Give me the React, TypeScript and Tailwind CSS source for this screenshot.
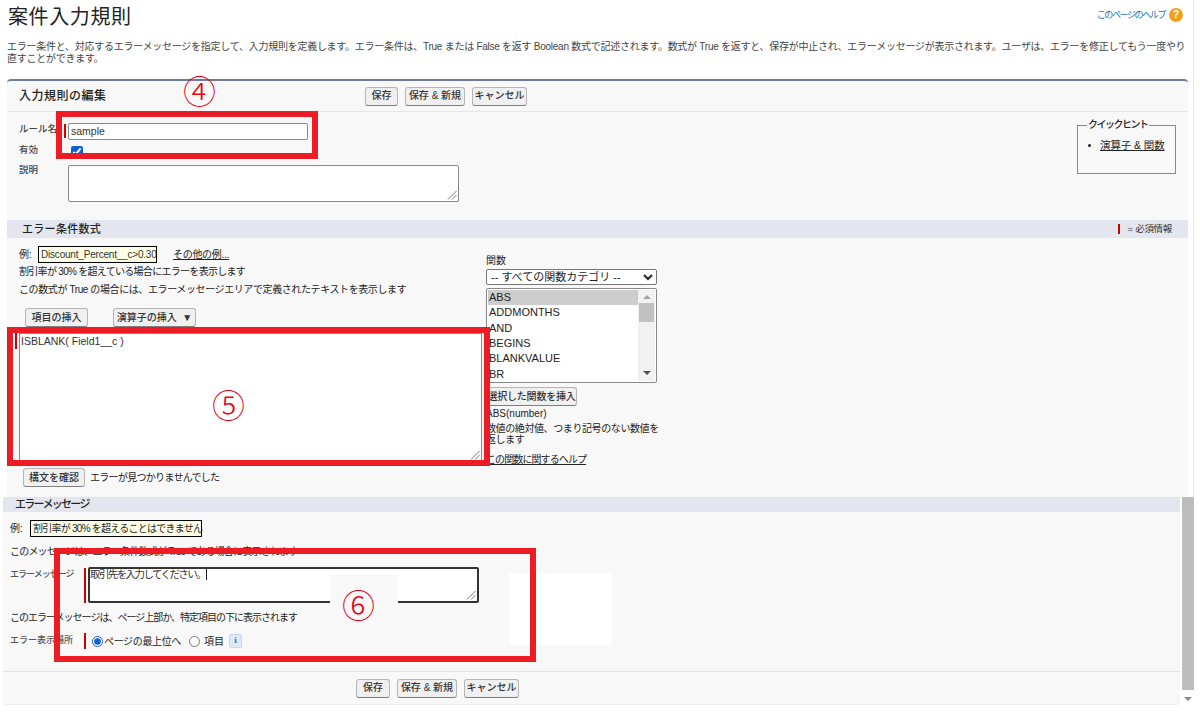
const font = "[font-family:'Liberation_Sans','Noto_Sans_CJK_JP',sans-serif]";

function Btn({ children, className = "" }: { children: React.ReactNode; className?: string }) {
  return (
    <button
      type="button"
      className={`h-[19px] rounded-[3px] border border-[#b5b5b5] border-b-[#7f7f7f] bg-[#f0f0f0] text-[10px] leading-none font-medium text-[#333] whitespace-nowrap ${className}`}
    >
      {children}
    </button>
  );
}

function Req({ className = "" }: { className?: string }) {
  return <div className={`w-[2px] shrink-0 bg-[#c00] ${className}`} />;
}

function Resize() {
  return (
    <svg className="absolute right-[1px] bottom-[1px]" width="10" height="10" viewBox="0 0 10 10">
      <path d="M1 9.5 9.5 1M5 9.5 9.5 5" stroke="#777" strokeWidth="1" fill="none" />
    </svg>
  );
}

function Note({ className }: { className: string }) {
  return <div className={`absolute pointer-events-none ${className}`} />;
}

const functions = ["ABS", "ADDMONTHS", "AND", "BEGINS", "BLANKVALUE", "BR"];

export default function App() {
  return (
    <div className={`relative h-[716px] w-[1200px] overflow-hidden bg-white text-[#222] ${font}`}>
      {/* page title */}
      <div className="flex h-[41px] items-start justify-between pt-[2px] pr-[17px] pl-[8px]">
        <h1 className="text-[20px] leading-[30px] font-normal tracking-[0.6px] text-[#222]">案件入力規則</h1>
        <div className="mt-[6px] flex items-center gap-[4px]">
          <span className="text-[9px] leading-[14px] tracking-[-1.4px] text-[#1b6fc0]">このページのヘルプ</span>
          <span className="flex h-[14px] w-[14px] items-center justify-center rounded-full bg-[#eda21e] text-[10px] leading-none font-bold text-white">?</span>
        </div>
      </div>
      <p className="h-[38px] pl-[7px] text-[10px] leading-[12px] tracking-[-0.26px] whitespace-nowrap text-[#444]">
        エラー条件と、対応するエラーメッセージを指定して、入力規則を定義します。エラー条件は、True または False を返す Boolean 数式で記述されます。数式が True を返すと、保存が中止され、エラーメッセージが表示されます。ユーザは、エラーを修正してもう一度やり
        <br />
        直すことができます。
      </p>

      {/* upper panel */}
      <div className="ml-[7px] h-[418px] w-[1181px] rounded-t-[4px] border-t-2 border-[#6f7a99] bg-[#f8f8f8]">
        <div className="flex h-[31px] items-center border-b border-[#e6e6e6] pl-[12px]">
          <h2 className="w-[346px] text-[12px] font-medium tracking-[0.5px] text-[#222]">入力規則の編集</h2>
          <div className="flex gap-[7px]">
            <Btn className="w-[33px]">保存</Btn>
            <Btn className="w-[60px]">保存 &amp; 新規</Btn>
            <Btn className="w-[55px]">キャンセル</Btn>
          </div>
        </div>

        <div className="flex h-[108px] justify-between pt-[10px] pr-[12px] pl-[12px]">
          <div className="text-[9.5px] font-medium text-[#444]">
            <div className="flex h-[18px] items-center">
              <span className="w-[45px] pb-[3px]">ルール名</span>
              <Req className="h-[14px]" />
              <input
                readOnly
                value="sample"
                className="ml-[2px] h-[17px] w-[240px] rounded-[2px] border border-[#888] bg-white px-[2px] text-[10.5px] font-normal text-[#333] outline-none"
              />
            </div>
            <div className="mt-[5px] flex h-[14px] items-center">
              <span className="w-[52px] pb-[4px]">有効</span>
              <input type="checkbox" readOnly checked className="h-[12px] w-[12px] accent-[#0f5fd0]" />
            </div>
            <div className="mt-[6px] flex">
              <span className="-mt-[2px] w-[49px]">説明</span>
              <div className="relative h-[37px] w-[391px] rounded-[2px] border border-[#888] bg-white">
                <Resize />
              </div>
            </div>
          </div>
          <fieldset className="-mt-[3px] h-[55px] w-[99px] border border-[#888] pl-[10px] text-[10px]">
            <legend className="-ml-[1px] px-[1px] text-[10px] leading-[12px] font-medium tracking-[-1.5px] text-[#222]">クイックヒント</legend>
            <div className="mt-[7px] flex items-center gap-[9px]">
              <span className="h-[3px] w-[3px] rounded-full bg-[#222]" />
              <span className="text-[10.5px] tracking-[-0.1px] underline">演算子 &amp; 関数</span>
            </div>
          </fieldset>
        </div>

        <div className="flex h-[18px] items-center justify-between bg-[#e3e6ef] pr-[16px] pl-[15px]">
          <h3 className="text-[11px] font-medium tracking-[0.3px] text-[#222]">エラー条件数式</h3>
          <div className="flex items-center gap-[8px] text-[9.5px] tracking-[-0.3px] text-[#333]">
            <Req className="h-[10px]" />
            <span>= 必須情報</span>
          </div>
        </div>

        <div className="flex pt-[8px] pl-[12px]">
          <div className="w-[467px] text-[10px] text-[#222]">
            <div className="flex h-[17px] items-center">
              <span className="w-[19px]">例:</span>
              <span className="flex h-[17px] w-[119px] items-center border border-black bg-[#ffffe8] pl-[2px] text-[10px] tracking-[-0.2px] text-[#333]">Discount_Percent__c&gt;0.30</span>
              <span className="ml-[16px] tracking-[-0.3px] underline">その他の例...</span>
            </div>
            <p className="mt-[1px] h-[18px] leading-[16px] tracking-[-0.7px]">割引率が 30% を超えている場合にエラーを表示します</p>
            <p className="h-[15px] leading-[16px] tracking-[-0.4px] whitespace-nowrap">この数式が True の場合には、エラーメッセージエリアで定義されたテキストを表示します</p>
            <div className="mt-[11px] flex gap-[25px] pl-[6px]">
              <Btn className="w-[63px]">項目の挿入</Btn>
              <Btn className="w-[83px]">演算子の挿入 &nbsp;▼</Btn>
            </div>
            <div className="mt-[6px] flex">
              <Req className="-ml-[4px] h-[16px]" />
              <div className="relative ml-[2px] h-[129px] w-[463px] border border-[#888] bg-white px-[1px] text-[10.5px] leading-[14px] text-[#333]">
                ISBLANK( Field1__c )
                <Resize />
              </div>
            </div>
            <div className="mt-[6px] flex h-[19px] items-center gap-[5px] pl-[4px]">
              <Btn className="w-[62px]">構文を確認</Btn>
              <span className="tracking-[-0.7px]">エラーが見つかりませんでした</span>
            </div>
          </div>

          <div className="w-[171px] pt-[9px] text-[10px] leading-[11px] text-[#222]">
            <div className="h-[12px]">関数</div>
            <select className="mt-[2px] block h-[16px] w-[171px] rounded-[2px] border border-[#777] bg-white text-[11px] leading-none text-[#222] outline-none">
              <option>-- すべての関数カテゴリ --</option>
            </select>
            <div className="mt-[3px] flex h-[95px] w-[171px] rounded-[2px] border border-[#888] bg-white p-[1px] text-[11px]">
              <div className="flex-1">
                {functions.map((f, i) => (
                  <div key={f} className={`flex h-[15.3px] items-center pl-[1px] ${i === 0 ? "bg-[#cdcdcd]" : ""}`}>
                    {f}
                  </div>
                ))}
              </div>
              <div className="flex w-[17px] flex-col items-center bg-[#f1f1f1] pt-[5px]">
                <div className="h-0 w-0 border-x-[4px] border-b-[4px] border-x-transparent border-b-[#a3a3a3]" />
                <div className="mt-[4px] h-[19px] w-[15px] bg-[#c1c1c1]" />
                <div className="mt-auto mb-[6px] h-0 w-0 border-x-[4px] border-t-[4px] border-x-transparent border-t-[#505050]" />
              </div>
            </div>
            <Btn className="mt-[4px] block w-[91px] tracking-[-0.2px]">選択した関数を挿入</Btn>
            <div className="mt-[1px] h-[14px] leading-[14px]">ABS(number)</div>
            <p className="mt-[2px] leading-[11px] tracking-[-0.4px] whitespace-nowrap">
              数値の絶対値、つまり記号のない数値を
              <br />
              返します
            </p>
            <div className="mt-[9px] tracking-[-0.9px] underline">この関数に関するヘルプ</div>
          </div>
        </div>
      </div>

      {/* lower panel */}
      <div className="ml-[3px] h-[208px] w-[1177px] rounded-b-[4px] border-b border-[#eee] bg-[#f8f8f8]">
        <div className="flex h-[15px] items-center bg-[#e3e6ef] pl-[12px]">
          <h3 className="text-[11px] font-medium tracking-[-1.7px] text-[#222]">エラーメッセージ</h3>
        </div>
        <div className="h-[159px] pt-[8px] pl-[7px] text-[10px] text-[#222]">
          <div className="flex h-[17px] items-center">
            <span className="w-[20px]">例:</span>
            <span className="flex h-[17px] w-[172px] items-center border border-black bg-[#ffffe8] pl-[2px] tracking-[-0.75px] whitespace-nowrap">割引率が 30% を超えることはできません</span>
          </div>
          <p className="mt-[8px] h-[14px] leading-[14px] tracking-[-0.8px]">このメッセージは、エラー条件数式が True である場合に表示されます</p>
          <div className="mt-[8px] flex h-[36px]">
            <span className="w-[74px] pt-[1px] text-[9px] font-medium tracking-[-1px] text-[#555]">エラーメッセージ</span>
            <Req className="mt-[1px] h-[35px]" />
            <div className="relative ml-[2px] h-[36px] w-[391px] rounded-[2px] border-2 border-[#333] bg-white text-[10.5px] leading-[11px] tracking-[-1.6px] text-[#333]">
              取引先を入力してください。
              <span className="ml-[1px] inline-block h-[11px] w-[1px] bg-[#222] align-top" />
              <Resize />
            </div>
          </div>
          <p className="mt-[8px] h-[14px] leading-[14px] tracking-[-1px]">このエラーメッセージは、ページ上部か、特定項目の下に表示されます</p>
          <div className="mt-[8px] flex h-[16px] items-center">
            <span className="w-[74px] text-[9px] font-medium text-[#555]">エラー表示場所</span>
            <Req className="h-[16px]" />
            <input type="radio" readOnly checked name="where" className="m-0 ml-[6px] h-[11px] w-[11px] accent-[#0f5fd0]" />
            <span className="ml-[1px] w-[85px] tracking-[-0.35px]">ページの最上位へ</span>
            <input type="radio" readOnly name="where" className="m-0 h-[11px] w-[11px]" />
            <span className="ml-[4px] w-[25px]">項目</span>
            <span className="flex h-[14px] w-[13px] items-center justify-center rounded-[2px] border border-[#c5d7ea] bg-[#dfeaf6] text-[9px] font-bold text-[#2f6db5] [font-family:'Liberation_Serif',serif]">i</span>
          </div>
        </div>
        <div className="flex h-[33px] items-center gap-[7px] border-t border-[#e2e2e2] pl-[353px]">
          <Btn className="w-[34px]">保存</Btn>
          <Btn className="w-[60px]">保存 &amp; 新規</Btn>
          <Btn className="w-[55px]">キャンセル</Btn>
        </div>
      </div>

      {/* scrollbar pasted at the right */}
      <div className="absolute top-0 right-[6px] h-[497px] w-[1px] bg-[#e4e4e4]" />
      <div className="absolute top-[497px] right-[6px] h-[193px] w-[12px] bg-[#bdbdbd]" />
      <div className="absolute top-[697px] right-[8px] h-0 w-0 border-x-[4px] border-t-[4px] border-x-transparent border-t-[#8a8a8a]" />

      {/* annotations drawn over the screenshot */}
      <Note className="top-[574px] left-[330px] h-[34px] w-[68px] bg-[#f8f8f8]" />
      <Note className="top-[573px] left-[509px] h-[72px] w-[103px] bg-white" />
      <Note className="top-[111px] left-[56px] h-[48px] w-[262px] border-[6px] border-[#ed1c24]" />
      <Note className="top-[327px] left-[7px] h-[139px] w-[483px] border-[6px] border-[#ed1c24]" />
      <Note className="top-[548px] left-[54px] h-[114px] w-[482px] border-[6px] border-[#ed1c24]" />
      <span className="absolute top-[74px] left-[183px] text-[33px] leading-[38px] font-light text-[#e60012]">④</span>
      <span className="absolute top-[388px] left-[212px] text-[33px] leading-[38px] font-light text-[#e60012]">⑤</span>
      <span className="absolute top-[588px] left-[342px] text-[33px] leading-[38px] font-light text-[#e60012]">⑥</span>
    </div>
  );
}
